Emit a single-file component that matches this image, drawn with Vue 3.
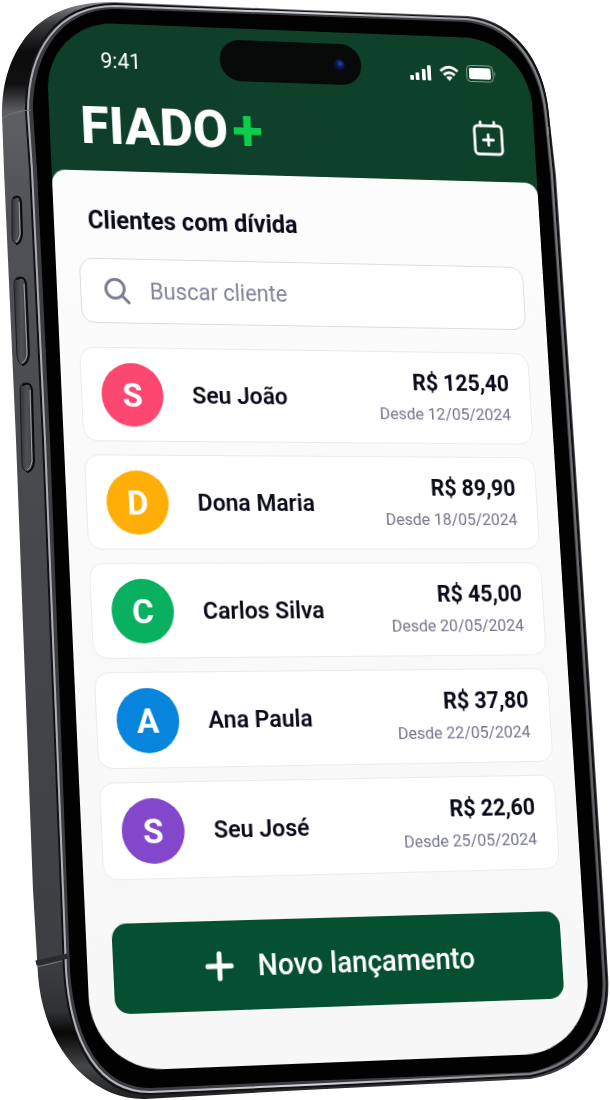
<template>
  <main class="page">
    <div ref="phone" class="phone">
      <svg class="phone-body" viewBox="0 0 610 1100" aria-hidden="true">
        <defs>
          <linearGradient id="side" x1="0" y1="0" x2="0" y2="1">
            <stop offset="0" stop-color="#8b8c8f" />
            <stop offset="0.02" stop-color="#38393b" />
            <stop offset="0.045" stop-color="#0c0c0d" />
            <stop offset="0.075" stop-color="#101011" />
            <stop offset="0.1" stop-color="#5e5f63" />
            <stop offset="0.2" stop-color="#515256" />
            <stop offset="0.5" stop-color="#47484b" />
            <stop offset="0.87" stop-color="#3e3f42" />
            <stop offset="0.92" stop-color="#303133" />
            <stop offset="0.94" stop-color="#070707" />
            <stop offset="0.97" stop-color="#454649" />
            <stop offset="1" stop-color="#1e1e20" />
          </linearGradient>
          <linearGradient id="rim" x1="0" y1="0" x2="1" y2="0">
            <stop offset="0" stop-color="#a9aaad" />
            <stop offset="0.5" stop-color="#d4d5d8" />
            <stop offset="0.85" stop-color="#8a8b8e" />
            <stop offset="1" stop-color="#5c5d60" />
          </linearGradient>
          <linearGradient id="key" x1="0" y1="0" x2="1" y2="0">
            <stop offset="0" stop-color="#333437" />
            <stop offset="0.5" stop-color="#505155" />
            <stop offset="1" stop-color="#3a3b3e" />
          </linearGradient>
        </defs>

        <path
          d="M2 115C2 84 9 60 25 38C42 16 70 1 115 2L305 10L468 16C515 20 545 62 549 115L556 175L576 470L603 890L608 975C612 1032 584 1070 530 1079L305 1090L145 1099C88 1100 43 1045 38 975L33 890L16 440L4 170Z"
          fill="url(#side)"
        />
        <!-- polished front edge -->
        <path
          d="M26 112C25 48 56 4 115 4L305 12L467 18C514 22 543 62 548 115L554 175L574 470L601 890L606 975C610 1030 582 1067 530 1076L305 1087L150 1094C98 1095 69 1048 64 970L61 890L43 440L30 170Z"
          fill="#3c3d40"
          stroke="#111214"
          stroke-width="2"
        />
        <path
          d="M28 112C28 50 58 6 115 6L305 13L466 19C512 23 541 63 546 115L552 175L572 470L599 890L604 975C608 1028 580 1064 530 1074L305 1085L150 1092C101 1092 71 1047 66 970L63 890L45 440L32 170Z"
          fill="none"
          stroke="url(#rim)"
          stroke-width="2"
        />
        <path
          d="M33 112C33 54 60 9 115 9L305 16L465 22C510 26 539 64 544 115L550 175L570 470L597 890L602 975C606 1026 578 1062 530 1072L305 1081L150 1088C104 1088 75 1045 70 970L67 890L50 440L37 170Z"
          fill="#020203"
        />

        <path d="M3 118Q13 111 31 110" fill="none" stroke="#727377" stroke-width="1" />
        <path d="M36 963L68 956" fill="none" stroke="#2a2b2d" stroke-width="5" />
        <path d="M37 967L62 961" fill="none" stroke="#77787c" stroke-width="1" />

        <g fill="url(#key)" stroke="#1b1c1e" stroke-width="1" stroke-linejoin="round">
          <path d="M12 202Q12 196 16 196Q20 196 21 202L22 234Q21 244 17 244Q12 243 12 236Z" />
          <path d="M14 284Q14 277 20 277Q25 277 26 284L29 354Q29 364 23 365Q18 364 17 356Z" />
          <path d="M20 390Q20 383 26 383Q31 383 32 390L34 462Q33 471 28 472Q22 471 22 463Z" />
        </g>
        <g fill="none" stroke="#0d0d0f" stroke-width="2" stroke-linecap="round">
          <path d="M14 198Q20 194 21 202L22 234Q21 243 17 244" />
          <path d="M17 279Q25 275 26 284L29 354Q28 363 23 365" />
          <path d="M23 385Q31 381 32 390L34 462Q33 470 28 472" />
        </g>
        <g fill="none" stroke="#a2a3a7" stroke-width="1">
          <path d="M19 202L20 234Q19 240 16 242" />
          <path d="M24 284L27 354Q26 361 22 363" />
          <path d="M30 390L32 461Q31 468 27 470" />
        </g>
        <path d="M548 127V135" stroke="#9a9b9e" stroke-width="1" />
      </svg>

      <div ref="screen" class="screen" :style="{ transform: projection }">
        <header class="app-header">
          <div class="status-bar">
            <span>9:41</span>
            <span class="status-icons">
              <svg width="24" height="17" viewBox="0 0 24 17" fill="currentColor" aria-hidden="true">
                <rect x="0" y="12" width="4" height="5" rx="1" />
                <rect x="6" y="9" width="4" height="8" rx="1" />
                <rect x="13" y="5" width="4" height="12" rx="1" />
                <rect x="19" y="1" width="4" height="16" rx="1" />
              </svg>
              <svg width="22" height="17" viewBox="0 0 22 17" fill="none" stroke="currentColor" stroke-width="3" aria-hidden="true">
                <path d="M1.500 6.500Q11-2 20.500 6.500" />
                <path d="M5 10.500Q11 5.500 17 10.500" />
                <path d="M7.500 13Q11 10.500 14.500 13L11 17Z" fill="currentColor" stroke="none" />
              </svg>
              <svg width="33" height="18" viewBox="0 0 33 18" aria-hidden="true">
                <rect x="0.500" y="0.500" width="29" height="17" rx="4" fill="none" stroke="#8ea79b" />
                <rect x="3" y="3" width="24" height="12" rx="2" fill="currentColor" />
                <path d="M31 6Q33 9 31 12Z" fill="#8ea79b" />
              </svg>
            </span>
            <div class="island"><span class="camera"></span></div>
          </div>
          <div class="brand-row">
            <h1 class="brand">
              FIADO<svg width="31" height="33" viewBox="0 0 31 33" aria-label="+" role="img">
                <path d="M11.500 1H19.500V13H30V20.500H19.500V32H11.500V20.500H1V13H11.500Z" fill="#0bce4c" />
              </svg>
            </h1>
            <button class="calendar-btn" type="button" aria-label="Agenda">
              <svg width="34" height="38" viewBox="0 0 34 38" fill="none" stroke="currentColor" stroke-width="3" stroke-linecap="round" stroke-linejoin="round" aria-hidden="true">
                <rect x="2" y="6" width="30" height="30" rx="4" />
                <path d="M9 6V2M24 6V2M17 15.500V26.500M11.500 21H22.500" />
              </svg>
            </button>
          </div>
        </header>

        <section class="panel">
          <h2 class="title">Clientes com dívida</h2>

          <label class="search">
            <svg width="27" height="27" viewBox="0 0 27 27" fill="none" stroke="currentColor" stroke-width="3" stroke-linecap="round" aria-hidden="true">
              <circle cx="11" cy="11" r="9.500" />
              <path d="M18 18L25 25" />
            </svg>
            <input v-model="query" type="text" placeholder="Buscar cliente" aria-label="Buscar cliente" />
          </label>

          <ul class="clients">
            <li v-for="client in filtered" :key="client.name" class="client">
              <span class="avatar" :class="client.tone">{{ client.name[0] }}</span>
              <span class="name">{{ client.name }}</span>
              <span class="debt">
                <strong>{{ client.amount }}</strong>
                <small>Desde {{ client.since }}</small>
              </span>
            </li>
          </ul>

          <button class="new-entry" type="button">
            <svg width="30" height="30" viewBox="0 0 30 30" fill="none" stroke="currentColor" stroke-width="5" stroke-linecap="round" aria-hidden="true">
              <path d="M15 3V27M3 15H27" />
            </svg>
            Novo lançamento
          </button>
        </section>
      </div>
    </div>
  </main>
</template>

<script setup>
import { computed, onBeforeUnmount, onMounted, ref } from 'vue'

const clients = [
  { name: 'Seu João', amount: 'R$ 125,40', since: '12/05/2024', tone: 'pink' },
  { name: 'Dona Maria', amount: 'R$ 89,90', since: '18/05/2024', tone: 'amber' },
  { name: 'Carlos Silva', amount: 'R$ 45,00', since: '20/05/2024', tone: 'green' },
  { name: 'Ana Paula', amount: 'R$ 37,80', since: '22/05/2024', tone: 'blue' },
  { name: 'Seu José', amount: 'R$ 22,60', since: '25/05/2024', tone: 'purple' }
]

const query = ref('')
const filtered = computed(() =>
  clients.filter(c => c.name.toLowerCase().includes(query.value.toLowerCase()))
)

// Corners of the glass in the phone drawing (viewBox units):
// top left, top right, bottom right, bottom left
const BODY_WIDTH = 610
const corners = [[45, 21], [528, 40], [592, 1052], [92, 1072]]

const phone = ref(null)
const screen = ref(null)
const projection = ref('none')

// Maps the flat w x h screen onto the four corners
function project() {
  const k = phone.value.clientWidth / BODY_WIDTH
  const w = screen.value.offsetWidth
  const h = screen.value.offsetHeight
  const [[x0, y0], [x1, y1], [x2, y2], [x3, y3]] = corners.map(([x, y]) => [x * k, y * k])
  const dx1 = x1 - x2
  const dx2 = x3 - x2
  const sx = x0 - x1 + x2 - x3
  const dy1 = y1 - y2
  const dy2 = y3 - y2
  const sy = y0 - y1 + y2 - y3
  const det = dx1 * dy2 - dx2 * dy1
  const p = (sx * dy2 - dx2 * sy) / det
  const q = (dx1 * sy - sx * dy1) / det
  const m = [
    (x1 - x0 + p * x1) / w, (y1 - y0 + p * y1) / w, 0, p / w,
    (x3 - x0 + q * x3) / h, (y3 - y0 + q * y3) / h, 0, q / h,
    0, 0, 1, 0,
    x0, y0, 0, 1
  ]
  projection.value = `matrix3d(${m.map(n => n.toFixed(8)).join(',')})`
}

let observer
onMounted(() => {
  project()
  observer = new ResizeObserver(project)
  observer.observe(phone.value)
  observer.observe(screen.value)
})
onBeforeUnmount(() => observer.disconnect())
</script>

<style>
body {
  background: #fff;
}
</style>

<style scoped>
.page {
  overflow: hidden;
  font-family: Roboto, "Liberation Sans", sans-serif;
}
.phone {
  position: relative;
  width: 100%;
}
.phone-body {
  display: block;
  width: 100%;
}
/* lies on the glass of the drawn phone */
.screen {
  position: absolute;
  top: 0;
  left: 0;
  width: 520px;
  min-height: 1040px;
  display: flex;
  flex-direction: column;
  transform-origin: 0 0;
  border-radius: 72px;
  overflow: hidden;
  background: #0e402b;
  box-shadow: 0 0 0 2px #020203;
  color: #0a0b18;
}
.app-header {
  display: flex;
  flex-direction: column;
  height: 152px;
  background: linear-gradient(90deg, #0f3e2b, #0d4229);
  color: #fff;
}
.status-bar {
  position: relative;
  display: flex;
  justify-content: space-between;
  align-items: center;
  height: 76px;
  padding: 0 38px 0 56px;
  font-size: 22px;
}
.status-icons {
  display: flex;
  align-items: center;
  gap: 8px;
}
.island {
  position: absolute;
  top: 12px;
  left: 182px;
  width: 152px;
  height: 43px;
  display: flex;
  align-items: center;
  justify-content: flex-end;
  padding-right: 18px;
  box-sizing: border-box;
  border-radius: 22px;
  background: #080909;
}
.camera {
  width: 12px;
  height: 12px;
  border-radius: 50%;
  background: radial-gradient(circle at 60% 40%, #2c47b8 0, #10195c 35%, #080a25 70%);
}
.brand-row {
  display: flex;
  justify-content: space-between;
  align-items: center;
  height: 60px;
  padding: 0 34px 0 32px;
}
.brand {
  display: flex;
  align-items: center;
  gap: 5px;
  margin: 0;
  font-size: 54px;
  line-height: 60px;
  font-weight: 800;
}
.calendar-btn {
  display: flex;
  padding: 0;
  border: none;
  background: none;
  color: #fff;
  cursor: pointer;
}
.panel {
  flex: 1;
  display: flex;
  flex-direction: column;
  padding: 33px 22px 54px;
  border-radius: 14px 14px 0 0;
  background: linear-gradient(#fcfcfc, #f7f7f8);
}
.title {
  margin: 0 0 20px;
  padding-left: 13px;
  font-size: 25px;
  line-height: 36px;
  font-weight: 700;
}
.search {
  display: flex;
  align-items: center;
  gap: 20px;
  height: 66px;
  margin: 0 0 24px 2px;
  padding: 0 24px;
  box-sizing: border-box;
  border: 1px solid #dcdce0;
  border-radius: 14px;
  background: #fff;
  color: #7b7b93;
}
.search input {
  flex: 1;
  min-width: 0;
  padding: 0;
  border: none;
  outline: none;
  background: none;
  font: inherit;
  font-size: 23px;
  color: #0a0b18;
}
.search input::placeholder {
  color: #82839a;
  opacity: 1;
}
.clients {
  display: flex;
  flex-direction: column;
  gap: 13px;
  margin: 0 0 42px -2px;
  padding: 0;
  list-style: none;
}
.client {
  display: flex;
  align-items: center;
  height: 95px;
  padding: 0 22px 0 20px;
  box-sizing: border-box;
  border: 1px solid #ebebee;
  border-radius: 15px;
  background: #fff;
}
.avatar {
  display: flex;
  align-items: center;
  justify-content: center;
  width: 64px;
  height: 64px;
  margin-right: 30px;
  border-radius: 50%;
  color: #fff;
  font-size: 34px;
  font-weight: 700;
}
.pink { background: #fc4770; }
.amber { background: #feae06; }
.green { background: #08b060; }
.blue { background: #0784dc; }
.purple { background: #8247cb; }
.name {
  flex: 1;
  font-size: 24px;
  font-weight: 600;
}
.debt {
  display: flex;
  flex-direction: column;
  align-items: flex-end;
}
.debt strong {
  font-size: 23px;
  line-height: 32px;
  font-weight: 700;
}
.debt small {
  font-size: 17px;
  line-height: 30px;
  color: #74758b;
}
.new-entry {
  display: flex;
  align-items: center;
  justify-content: center;
  gap: 24px;
  height: 87px;
  margin: 0 4px;
  border: none;
  border-radius: 15px;
  background: #045031;
  color: #fff;
  font: inherit;
  font-size: 29px;
  font-weight: 500;
  cursor: pointer;
}
</style>
